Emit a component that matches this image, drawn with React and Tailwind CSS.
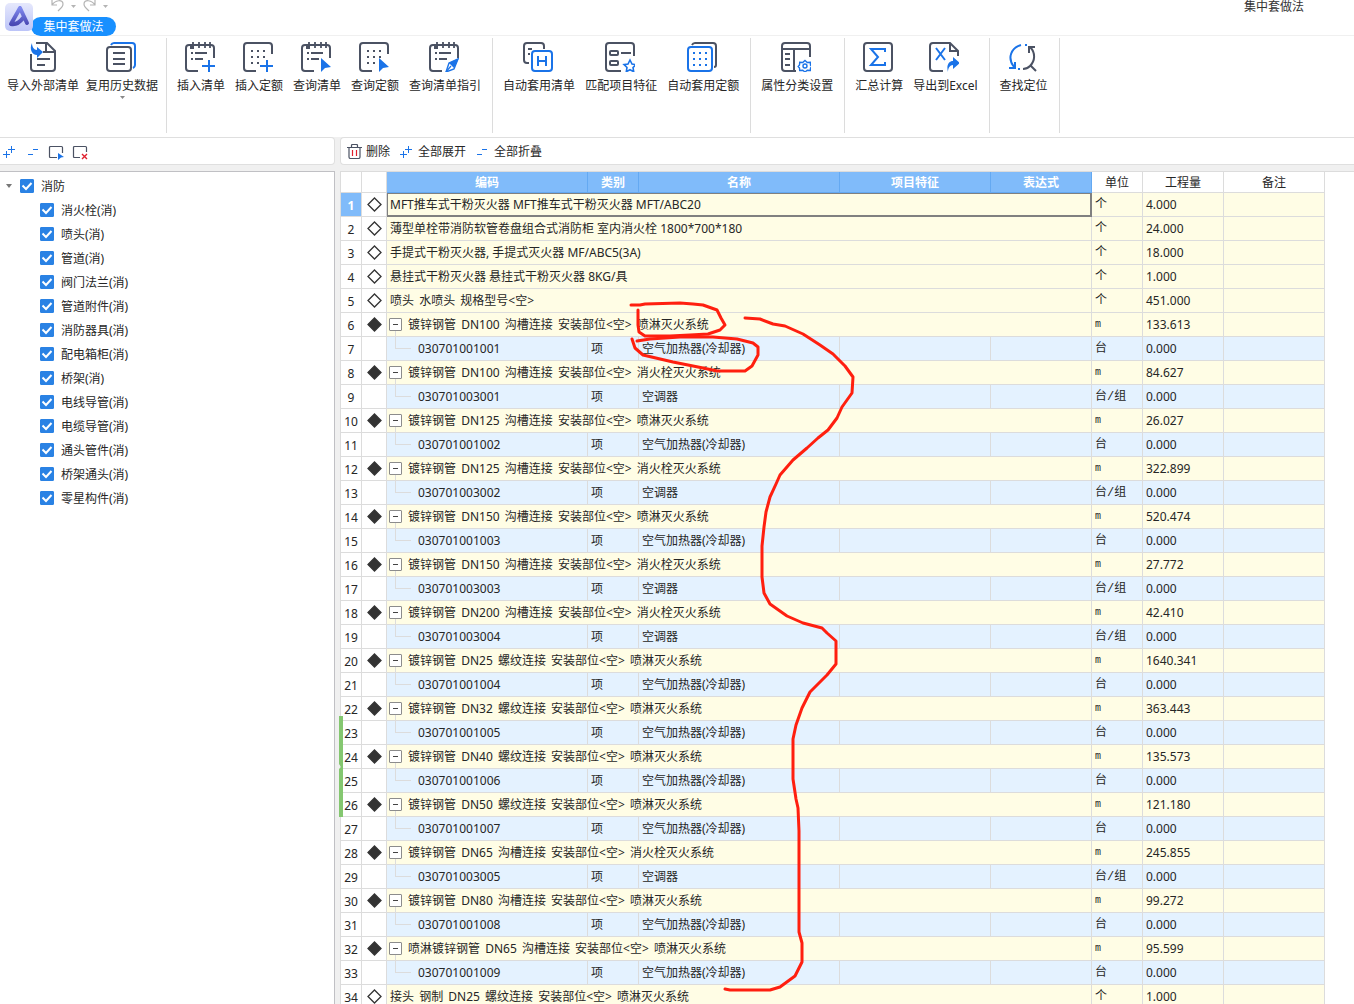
import React from "react";

const INK = "#4b5263";
const BLUE = "#1a73e8";

function Icon({ children, className = "h-[30px] w-[30px]", box = "0 0 30 30" }) {
  return (
    <svg className={className} viewBox={box} fill="none" stroke={INK} strokeWidth="2" aria-hidden="true">
      {children}
    </svg>
  );
}

const Pad = () => (
  <>
    <path d="M13 29H4q-3 0-3-3V6q0-3 3-3h22q3 0 3 3v10" />
    <path d="M8 0v6M14 0v6M20 0v6M25 0v6" strokeWidth="1.8" />
    <path d="M5 3h4v4H5z" fill={INK} stroke="none" />
    <path d="M6 11h2M10 11h12M6 17h2M10 17h8" />
  </>
);
const DotPad = () => (
  <>
    <path d="M13 29H4q-3 0-3-3V4q0-3 3-3h22q3 0 3 3v8" />
    <path d="M8 9h2M14 9h2M20 9h2M8 15h2M14 15h2M20 15h2M8 21h2M14 21h2" />
  </>
);
const Plus = () => <path d="M24 18v12M17 24h13" stroke={BLUE} />;
const Pointer = () => <path d="M20 16l10 9-6 1-4 4z" fill={BLUE} stroke="none" />;

const icons = {
  importList: (
    <Icon>
      <g transform="translate(2 0)">
        <path d="M2 12v14q0 3 3 3h18q3 0 3-3V9l-8-8H7" />
        <path d="M17 2v8h8M14 10h3M8 17h13M8 23h8" />
        <path d="M3 1c-3 6 0 12 5 12v3l6-6-6-5v3C5 8 3 5 3 1z" fill={BLUE} stroke="none" />
      </g>
    </Icon>
  ),
  reuse: (
    <Icon>
      <path d="M5 3q1-2 3-2h18q3 0 3 3v19q0 2-2 3" stroke={BLUE} />
      <rect x="1" y="5" width="24" height="24" rx="3" />
      <path d="M7 11h12M7 17h12M7 22h12" />
    </Icon>
  ),
  insertList: <Icon><Pad /><Plus /></Icon>,
  insertQuota: <Icon><DotPad /><Plus /></Icon>,
  queryList: <Icon><Pad /><Pointer /></Icon>,
  queryQuota: <Icon><DotPad /><Pointer /></Icon>,
  guide: (
    <Icon>
      <Pad />
      <path d="M29 17l-4 10-8 3 3-9z" fill="#fff" stroke={BLUE} strokeWidth="1.4" />
      <path d="M30 16l-10 5 5 5z" fill={BLUE} stroke="none" />
      <path d="M17 30l5-6" stroke={BLUE} strokeWidth="1.2" />
    </Icon>
  ),
  autoList: (
    <Icon>
      <path d="M6 21H4q-3 0-3-3V4q0-3 3-3h14q3 0 3 3v3M5 7h4M5 12h2" />
      <rect x="9" y="9" width="20" height="20" rx="3" stroke={BLUE} />
      <path d="M15 14v10M23 14v10M15 19h8" stroke={BLUE} />
    </Icon>
  ),
  match: (
    <Icon>
      <path d="M16 29H4q-3 0-3-3V4q0-3 3-3h22q3 0 3 3v10" />
      <rect x="5" y="9" width="8" height="4" rx="1" />
      <rect x="5" y="19" width="8" height="4" rx="1" />
      <path d="M16 11h10" />
      <path d="M25 18l2 4 4 .6-3 2.9.7 4.2-3.7-2-3.7 2 .7-4.2-3-2.9 4-.6z" stroke={BLUE} strokeWidth="1.6" />
    </Icon>
  ),
  autoQuota: (
    <Icon>
      <path d="M5 3q1-2 3-2h18q3 0 3 3v19q0 2-2 2" />
      <rect x="1" y="5" width="24" height="24" rx="3" stroke={BLUE} />
      <path d="M6 11h2M12 11h2M18 11h2M6 17h2M12 17h2M18 17h2M6 23h2M12 23h2M18 23h2" stroke={BLUE} />
    </Icon>
  ),
  attr: (
    <Icon>
      <path d="M15 29H4q-3 0-3-3V4q0-3 3-3h22q3 0 3 3v11M1 7h28M13 7v22M4 12h5M4 17h5M4 23h5" />
      <path d="M24 18.500l2.300 2 3-.3.200 3 1.500 1.300-1.500 1.500-.2 2.500-3-.2-2.300 1.700-2.300-1.700-3 .2-.2-2.500-1.300-1.500 1.300-1.500.2-2.800 3 .3z" stroke={BLUE} strokeWidth="1.400" />
      <circle cx="24" cy="24" r="2" stroke={BLUE} strokeWidth="1.4" />
    </Icon>
  ),
  sum: (
    <Icon>
      <rect x="1" y="1" width="28" height="28" rx="3" />
      <path d="M22 10V7H8l7 8-7 8h14v-3" stroke={BLUE} />
    </Icon>
  ),
  excel: (
    <Icon>
      <path d="M14 29H4q-3 0-3-3V4q0-3 3-3h17l8 8v5M21 1v8h8" />
      <path d="M7 6l9 12M16 6L7 18" stroke={BLUE} />
      <path d="M19 30c-2-7 1-11 5-11v-4l7 6-7 6v-4c-3 0-5 3-5 7z" fill={BLUE} stroke="none" />
    </Icon>
  ),
  locate: (
    <Icon>
      <path d="M13 3C3 6-1 16 6 25M1 26h6v-6" stroke={BLUE} />
      <path d="M17 3h2M10 27h2" stroke={BLUE} />
      <path d="M22 5c6 6 5 14 0 19-2 2-4 3-7 3M21 11V5h6M22 23l6 6" />
    </Icon>
  ),
};

const ribbon = [
  [["导入外部清单", "importList"], ["复用历史数据", "reuse", true]],
  [["插入清单", "insertList"], ["插入定额", "insertQuota"], ["查询清单", "queryList"], ["查询定额", "queryQuota"], ["查询清单指引", "guide"]],
  [["自动套用清单", "autoList"], ["匹配项目特征", "match"], ["自动套用定额", "autoQuota"]],
  [["属性分类设置", "attr"]],
  [["汇总计算", "sum"], ["导出到Excel", "excel"]],
  [["查找定位", "locate"]],
];

const Caret = ({ color = "#888" }) => (
  <svg className="h-[3px] w-[5px]" viewBox="0 0 5 3" aria-hidden="true"><path d="M0 0h5L2.500 3z" fill={color} /></svg>
);

const ExpandIcon = () => (
  <Icon className="h-3 w-3" box="0 0 12 12">
    <path d="M8.500 0v7M5 3.500h7M3.500 5v7M0 8.500h7" stroke={BLUE} strokeWidth="1" />
  </Icon>
);
const CollapseIcon = () => (
  <Icon className="h-3 w-3" box="0 0 12 12">
    <path d="M6 3.500h5M1 8.500h5" stroke={BLUE} strokeWidth="1" />
  </Icon>
);

function TopBar() {
  return (
    <header className="flex h-9 shrink-0 items-start border-b border-[#f0f0f0] bg-white pl-[5px]">
      <svg className="relative z-10 mt-[3px] h-7 w-7 shrink-0" viewBox="0 0 28 28" aria-hidden="true">
        <defs>
          <linearGradient id="tile" x1="0" y1="0" x2="0" y2="1">
            <stop offset="0" stopColor="#e6e8fc" />
            <stop offset="1" stopColor="#bcc4f8" />
          </linearGradient>
          <linearGradient id="mark" x1="0" y1="0" x2="0" y2="1">
            <stop offset="0" stopColor="#8089ee" />
            <stop offset="1" stopColor="#4a49b4" />
          </linearGradient>
        </defs>
        <rect width="28" height="28" rx="5" fill="url(#tile)" />
        <path d="M15 5L6 21c5 1 9-2 12-6M15 5l7 15" fill="none" stroke="url(#mark)" strokeWidth="4" strokeLinecap="round" strokeLinejoin="round" />
      </svg>
      <div className="-ml-[2px] flex flex-col">
        <div className="flex h-[17px] items-start gap-[7px] pl-5">
          <button className="flex items-center gap-[7px]" aria-label="撤销">
            <svg className="h-3 w-[13px]" viewBox="0 0 13 12" fill="none" stroke="#b4b4b4" strokeWidth="1.200"><path d="M1 0v5h5M1 5C4 0 12-1 12 4c0 3-3 5-5 7" /></svg>
            <Caret color="#b4b4b4" />
          </button>
          <button className="flex items-center gap-[7px]" aria-label="恢复">
            <svg className="h-3 w-[13px]" viewBox="0 0 13 12" fill="none" stroke="#b4b4b4" strokeWidth="1.200"><path d="M12 0v5H7M12 5C9 0 1-1 1 4c0 3 3 5 5 7" /></svg>
            <Caret color="#b4b4b4" />
          </button>
        </div>
        <button className="h-[19px] w-[85px] rounded-full bg-[#1890ff] text-center leading-[19px] text-white">集中套做法</button>
      </div>
      <div className="ml-auto pr-[50px] leading-[14px] text-[#333]">集中套做法</div>
    </header>
  );
}

function Ribbon() {
  return (
    <nav className="flex h-[101px] shrink-0 items-start bg-white pt-[2px]">
      {ribbon.map((group, i) => (
        <div
          key={i}
          className={"flex h-[95px] items-start border-r border-[#dcdcdc] pt-1 " + (i === 0 ? "gap-[7px] pr-2 pl-[7px]" : "gap-[10px] pr-[11px] pl-[10px]")}
        >
          {group.map(([label, icon, menu]) => (
            <button key={label} className="flex flex-col items-center whitespace-nowrap">
              <span className="mr-[2px]">{icons[icon]}</span>
              <span className="mt-[6px] leading-4">{label}</span>
              {menu && <span className="mt-[2px]"><Caret /></span>}
            </button>
          ))}
        </div>
      ))}
    </nav>
  );
}

function Check({ id }) {
  return (
    <span className="grid h-[14px] w-[14px] shrink-0">
      <input id={id} type="checkbox" defaultChecked className="peer col-start-1 row-start-1 h-[14px] w-[14px] appearance-none rounded-[1px] border border-[#2a82e4] bg-white checked:bg-[#2a82e4]" />
      <svg className="pointer-events-none invisible col-start-1 row-start-1 peer-checked:visible" viewBox="0 0 14 14" fill="none" stroke="#fff" strokeWidth="2" aria-hidden="true">
        <path d="M2.500 6.500l3.500 3.500 5.500-6" />
      </svg>
    </span>
  );
}

const parts = ["消火栓(消)", "喷头(消)", "管道(消)", "阀门法兰(消)", "管道附件(消)", "消防器具(消)", "配电箱柜(消)", "桥架(消)", "电线导管(消)", "电缆导管(消)", "通头管件(消)", "桥架通头(消)", "零星构件(消)"];

function Sidebar() {
  return (
    <aside className="flex w-[335px] shrink-0 flex-col">
      <div className="flex h-7 shrink-0 items-center rounded-r border border-l-0 border-[#dfdfdf] bg-white pt-[2px] pl-[3px]">
        <div className="flex gap-3">
          <button aria-label="全部展开"><ExpandIcon /></button>
          <button aria-label="全部折叠"><CollapseIcon /></button>
        </div>
        <div className="ml-[9px] flex gap-2">
          <button aria-label="选择">
            <Icon className="h-[15px] w-4" box="0 0 16 15">
              <path d="M9 12.500H2.500q-1 0-1-1v-9q0-1 1-1h11q1 0 1 1V8" strokeWidth="1.200" />
              <path d="M10 8l6 4-3 .5-3 2.500z" fill={BLUE} stroke="none" />
            </Icon>
          </button>
          <button aria-label="取消选择">
            <Icon className="h-[15px] w-4" box="0 0 16 15">
              <path d="M8 12.500H2.500q-1 0-1-1v-9q0-1 1-1h11q1 0 1 1V7" strokeWidth="1.200" />
              <path d="M10 9l5 5M15 9l-5 5" stroke="#e0202e" strokeWidth="1.400" />
            </Icon>
          </button>
        </div>
      </div>
      <div className="mt-[6px] flex-1 border-t border-r border-[#c0c0c4] bg-white pt-[2px]">
        <div className="flex h-6 items-center pl-[6px]">
          <svg className="mr-2 h-1 w-[6px]" viewBox="0 0 6 4" aria-hidden="true"><path d="M0 0h6L3 4z" fill="#777" /></svg>
          <Check id="part-root" />
          <label htmlFor="part-root" className="pt-[2px] pl-[7px]">消防</label>
        </div>
        <ul>
          {parts.map((p, i) => (
            <li key={p} className="flex h-6 items-center pl-10">
              <Check id={"part-" + i} />
              <label htmlFor={"part-" + i} className="pt-[2px] pl-[7px]">{p}</label>
            </li>
          ))}
        </ul>
      </div>
    </aside>
  );
}

const pipe = (spec, link, system) => `${spec} ${link}连接 安装部位<空> ${system}`;
const SPRAY = "喷淋灭火系统";
const HYDRANT = "消火栓灭火系统";
const HEATER = "空气加热器(冷却器)";
const AC = "空调器";

const rows = [
  { text: "MFT推车式干粉灭火器 MFT推车式干粉灭火器 MFT/ABC20", unit: "个", qty: "4.000", active: true },
  { text: "薄型单栓带消防软管卷盘组合式消防柜 室内消火栓 1800*700*180", unit: "个", qty: "24.000" },
  { text: "手提式干粉灭火器, 手提式灭火器 MF/ABC5(3A)", unit: "个", qty: "18.000" },
  { text: "悬挂式干粉灭火器 悬挂式干粉灭火器 8KG/具", unit: "个", qty: "1.000" },
  { text: "喷头 水喷头 规格型号<空>", unit: "个", qty: "451.000", spaced: true },
  ...[
    ["镀锌钢管 DN100", "沟槽", SPRAY, "133.613", "030701001001"],
    ["镀锌钢管 DN100", "沟槽", HYDRANT, "84.627", "030701003001"],
    ["镀锌钢管 DN125", "沟槽", SPRAY, "26.027", "030701001002"],
    ["镀锌钢管 DN125", "沟槽", HYDRANT, "322.899", "030701003002"],
    ["镀锌钢管 DN150", "沟槽", SPRAY, "520.474", "030701001003"],
    ["镀锌钢管 DN150", "沟槽", HYDRANT, "27.772", "030701003003"],
    ["镀锌钢管 DN200", "沟槽", HYDRANT, "42.410", "030701003004"],
    ["镀锌钢管 DN25", "螺纹", SPRAY, "1640.341", "030701001004"],
    ["镀锌钢管 DN32", "螺纹", SPRAY, "363.443", "030701001005"],
    ["镀锌钢管 DN40", "螺纹", SPRAY, "135.573", "030701001006"],
    ["镀锌钢管 DN50", "螺纹", SPRAY, "121.180", "030701001007"],
    ["镀锌钢管 DN65", "沟槽", HYDRANT, "245.855", "030701003005"],
    ["镀锌钢管 DN80", "沟槽", SPRAY, "99.272", "030701001008"],
    ["喷淋镀锌钢管 DN65", "沟槽", SPRAY, "95.599", "030701001009"],
  ].flatMap(([spec, link, system, qty, code]) => [
    { parent: true, spaced: true, text: pipe(spec, link, system), unit: "m", qty },
    { code, name: system === SPRAY ? HEATER : AC, unit: system === SPRAY ? "台" : "台/组", qty: "0.000" },
  ]),
  { text: "接头 钢制 DN25 螺纹连接 安装部位<空> 喷淋灭火系统", unit: "个", qty: "1.000", spaced: true },
];

const columns = [["编码", true], ["类别", true], ["名称", true], ["项目特征", true], ["表达式", true], ["单位"], ["工程量"], ["备注"]];

function Description({ row }) {
  if (!row.spaced) return row.text;
  return row.text.split(" ").map((word, i) => (
    <React.Fragment key={i}>
      {i > 0 && " "}
      <span className="mr-[2px]">{word}</span>
    </React.Fragment>
  ));
}

function Row({ row, index }) {
  const cell = "h-6 border-r border-b border-[#dcdcdc] p-0 ";
  return (
    <tr className={row.code ? "bg-[#e4f2ff]" : "bg-[#fffde5]"}>
      <th scope="row" className={cell + "text-center " + (row.active ? "bg-[#80bbfa] font-bold text-white" : "bg-white font-normal")}>
        <span className="block pt-[2px]">{index + 1}</span>
      </th>
      <td className={cell + "bg-white"}>
        {!row.code && (
          <svg className="mx-auto block h-[15px] w-[15px]" viewBox="0 0 15 15" aria-hidden="true">
            <path d="M7.500 1l6.500 6.500-6.500 6.500L1 7.500z" fill={row.parent ? "#333" : "#fff"} stroke="#333" strokeWidth="1.300" />
          </svg>
        )}
      </td>
      {row.code ? (
        <>
          <td className={cell}>
            <div className="flex h-[23px] items-center pl-2">
              <span className="h-3 w-4 self-start border-b border-l border-[#dcdcdc]" />
              <span className="pl-[7px]">{row.code}</span>
            </div>
          </td>
          <td className={cell + "pl-[3px]"}>项</td>
          <td className={cell + "pl-[3px]"}>{row.name}</td>
          <td className={cell} />
          <td className={cell} />
        </>
      ) : (
        <td
          colSpan={5}
          className={
            row.active
              ? "h-6 border-r border-b border-[#808080] p-0 shadow-[inset_1px_1px_0_#808080,inset_-1px_-1px_0_#808080]"
              : cell
          }
        >
          {row.parent ? (
            <div className="flex h-[23px] items-center pl-[2px]">
              <span className="flex flex-col items-center self-start pt-[5px]">
                <button aria-label="折叠" className="flex h-[13px] w-[13px] items-center justify-center rounded-[1px] border border-[#8c8c8c] bg-white">
                  <span className="h-px w-[5px] bg-[#444]" />
                </button>
                <span className="h-[5px] w-px bg-[#dcdcdc]" />
              </span>
              <span className="pl-[6px]"><Description row={row} /></span>
            </div>
          ) : (
            <div className="pl-[3px]"><Description row={row} /></div>
          )}
        </td>
      )}
      <td className={cell + "pl-[3px] font-['Liberation_Mono','Noto_Sans_CJK_SC',monospace] " + (row.unit === "m" ? "text-[10px]" : "")}>{row.unit}</td>
      <td className={cell + "pl-[3px]"}>{row.qty}</td>
      <td className={cell} />
    </tr>
  );
}

function Marks() {
  return (
    <svg className="pointer-events-none absolute top-0 left-0 h-[833px] w-[985px]" viewBox="340 171 985 833" fill="none" stroke="#ff1f0f" strokeWidth="3" strokeLinecap="round" strokeLinejoin="round" aria-hidden="true">
      <path d="M631 305H640L645 304 680 303 693 304 703 305 717 310 721 318 725 325 720 330 708 334 690 335 670 336H645L639 332 638 325V310" />
      <path d="M637 341L650 339 680 337 713 337 737 339 753 343 758 347V355L752 366 745 371H717L703 368 673 362 643 355 635 348 632 339" />
      <path d="M745 318L760 319 773 324 785 326 803 334 820 345 833 354 845 366 853 377 852 393 842 407 837 418 828 430 818 438 807 448 793 460 780 475 776 484 770 497 766 512 764 527 762 546V577L764 593 770 604 787 616 803 623 822 628 827 633 836 641V664L827 675 810 692 802 708 796 725 793 739V779L796 799 798 808 799 831V932L802 943V962L795 976 780 987 770 990H730L725 989" />
    </svg>
  );
}

function Grid() {
  return (
    <div className="relative mt-[6px] flex-1 border-t border-l border-[#dcdcdc] bg-white">
      <table className="w-[984px] table-fixed border-separate border-spacing-0">
        <colgroup>
          <col className="w-[21px]" />
          <col className="w-[25px]" />
          <col className="w-[201px]" />
          <col className="w-[51px]" />
          <col className="w-[201px]" />
          <col className="w-[151px]" />
          <col className="w-[101px]" />
          <col className="w-[51px]" />
          <col className="w-[81px]" />
          <col className="w-[101px]" />
        </colgroup>
        <thead>
          <tr>
            <td className="h-[21px] border-r border-b border-[#dcdcdc] p-0" />
            <td className="h-[21px] border-r border-b border-[#dcdcdc] p-0" />
            {columns.map(([name, on]) => (
              <th
                key={name}
                scope="col"
                className={"h-[21px] border-r border-b p-0 pt-[2px] text-center " + (on ? "border-[#64a9f2] bg-[#80bbfa] font-bold text-white" : "border-[#dcdcdc] font-normal")}
              >
                {name}
              </th>
            ))}
          </tr>
        </thead>
        <tbody>
          {rows.map((row, i) => <Row key={i} row={row} index={i} />)}
        </tbody>
      </table>
      <svg className="absolute top-[544px] -left-[2px] h-[101px] w-1" viewBox="0 0 4 101" aria-hidden="true">
        <path d="M0 0h4v101H0V53l2-2-2-3z" fill="#84c770" />
      </svg>
      <div className="absolute -top-px -left-px"><Marks /></div>
    </div>
  );
}

export default function App() {
  return (
    <div className="flex h-screen flex-col overflow-hidden bg-[#f0f0f0] font-['Noto_Sans','Noto_Sans_CJK_SC',sans-serif] text-[12px] leading-4 text-[#262626]">
      <TopBar />
      <Ribbon />
      <div className="flex min-h-0 flex-1">
        <Sidebar />
        <main className="ml-[5px] flex min-w-0 flex-1 flex-col">
          <div className="flex h-7 shrink-0 items-center rounded-l border border-r-0 border-[#dfdfdf] bg-white pt-[2px] pl-[6px]">
            <button className="flex items-center gap-1">
              <svg className="mb-[2px] h-[15px] w-[15px]" viewBox="0 0 15 15" fill="none" stroke={INK} strokeWidth="1.200" aria-hidden="true">
                <path d="M0 3.500h15M4.500 3.500v-2q0-1 1-1h4q1 0 1 1v2M2 4v9q0 1.500 1.500 1.500h8q1.500 0 1.500-1.500V4" />
                <path d="M5.500 6v6M9.500 6v6" stroke="#e0202e" />
              </svg>
              删除
            </button>
            <button className="ml-[10px] flex items-center gap-[6px]"><ExpandIcon />全部展开</button>
            <button className="ml-[10px] flex items-center gap-[6px]"><CollapseIcon />全部折叠</button>
          </div>
          <Grid />
        </main>
      </div>
    </div>
  );
}
